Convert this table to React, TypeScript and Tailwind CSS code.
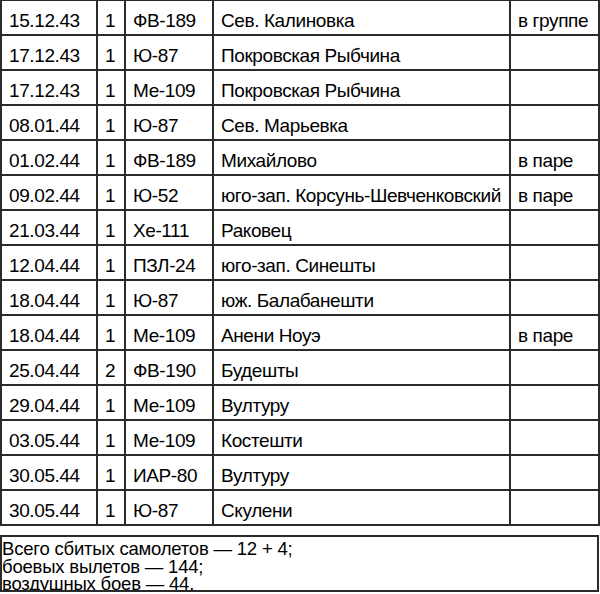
const rows = [
  ["15.12.43", "1", "ФВ-189", "Сев. Калиновка", "в группе"],
  ["17.12.43", "1", "Ю-87", "Покровская Рыбчина", ""],
  ["17.12.43", "1", "Ме-109", "Покровская Рыбчина", ""],
  ["08.01.44", "1", "Ю-87", "Сев. Марьевка", ""],
  ["01.02.44", "1", "ФВ-189", "Михайлово", "в паре"],
  ["09.02.44", "1", "Ю-52", "юго-зап. Корсунь-Шевченковский", "в паре"],
  ["21.03.44", "1", "Хе-111", "Раковец", ""],
  ["12.04.44", "1", "ПЗЛ-24", "юго-зап. Синешты", ""],
  ["18.04.44", "1", "Ю-87", "юж. Балабанешти", ""],
  ["18.04.44", "1", "Ме-109", "Анени Ноуэ", "в паре"],
  ["25.04.44", "2", "ФВ-190", "Будешты", ""],
  ["29.04.44", "1", "Ме-109", "Вултуру", ""],
  ["03.05.44", "1", "Ме-109", "Костешти", ""],
  ["30.05.44", "1", "ИАР-80", "Вултуру", ""],
  ["30.05.44", "1", "Ю-87", "Скулени", ""],
];

export default function App() {
  return (
    <div className="w-[600px] h-[594px] bg-white text-black font-['Liberation_Sans',Arial,sans-serif] overflow-hidden">
      <div className="grid grid-cols-[96px_28px_88px_297px_89px] border-l-2 border-t border-[#2a2a2a] text-[19px] tracking-[-0.4px]">
        {rows.map((row, i) =>
          row.map((cell, j) => (
            <div
              key={i + "-" + j}
              className="h-[35px] flex items-center pt-[6px] pl-[7px] border-r-2 border-b-2 border-[#2a2a2a] whitespace-nowrap leading-none"
            >
              {cell}
            </div>
          ))
        )}
      </div>
      <div className="mt-[9px] h-[57px] w-[599px] border-2 border-[#2a2a2a] overflow-hidden pt-[3px] text-[18.5px] tracking-[-0.2px] leading-[17.5px]">
        <div>Всего сбитых самолетов — 12 + 4;</div>
        <div>боевых вылетов — 144;</div>
        <div>воздушных боев — 44.</div>
      </div>
    </div>
  );
}
